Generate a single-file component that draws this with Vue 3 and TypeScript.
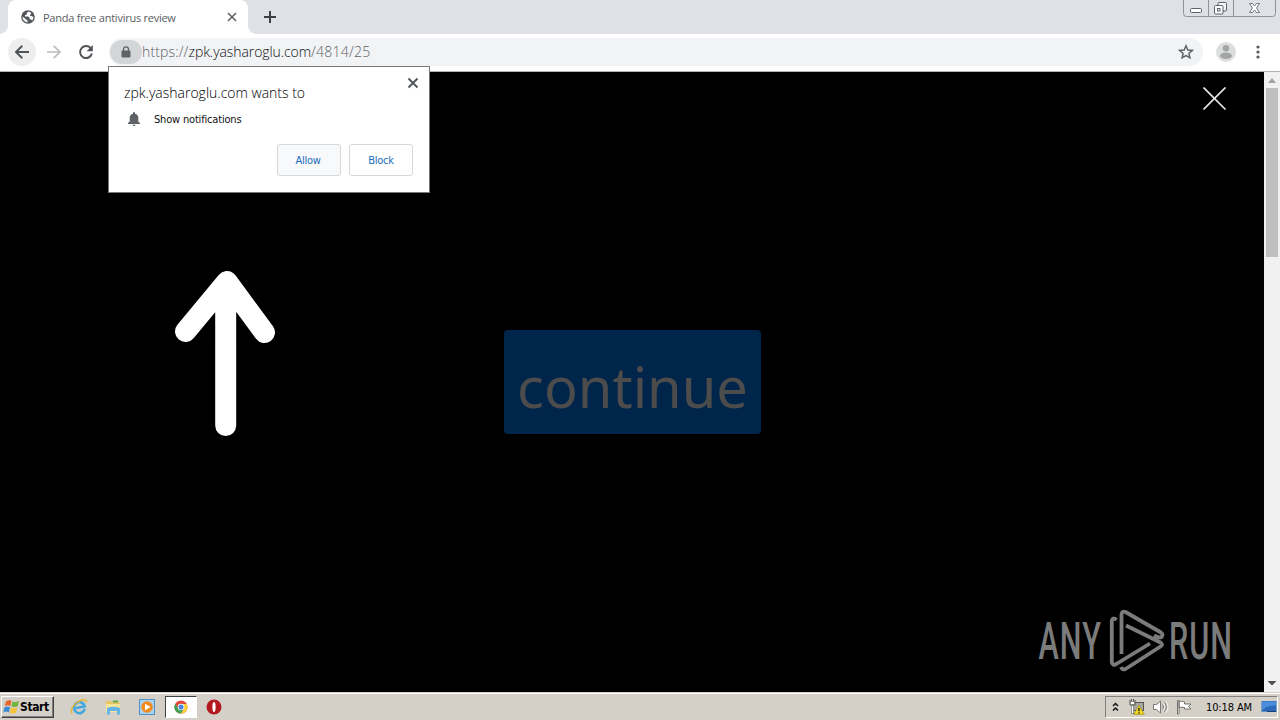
<script setup lang="ts">
import { ref } from 'vue'

const tabTitle = ref('Panda free antivirus review')
const host = 'zpk.yasharoglu.com'
const path = '/4814/25'
const clock = '10:18 AM'
const actions = ['Allow', 'Block']
</script>

<template>
  <div class="desktop">
    <header class="tabstrip">
      <div class="tab">
        <svg class="globe" width="14" height="14" viewBox="0 0 14 14">
          <circle cx="7" cy="7" r="6.8" fill="#53565a" />
          <path d="M7.5 1.4 5.8 3v1.5L4 5.2v1.3h3.2l1.4 1.2v1.5l1.5.2 1.2 1A5.5 5.5 0 0 0 12.5 7l-1.5-.7-1.8-.2V4.400l1.200-1.200A5.600 5.600 0 0 0 7.500 1.400zM1.500 6.500A5.600 5.600 0 0 0 6.500 12.500v-2L4.200 8.700z" fill="#fff" />
        </svg>
        <span class="tab-title">{{ tabTitle }}</span>
        <svg class="tab-close" width="10" height="10" viewBox="0 0 10 10">
          <path d="M1 1l8 8M9 1l-8 8" stroke="#5f6368" stroke-width="1.6" />
        </svg>
      </div>
      <svg class="new-tab" width="12" height="12" viewBox="0 0 12 12">
        <path d="M6 0v12M0 6h12" stroke="#3c4043" stroke-width="2" />
      </svg>
      <svg class="win-controls" width="94" height="18" viewBox="0 0 94 18">
        <path d="M.5 0v13.500q0 3 3 3h86q3 0 3-3V0M25.500 0v16.500M50.500 0v16.500" fill="none" stroke="#8d929b" />
        <rect x="7.500" y="8.500" width="11" height="4" rx="1" fill="#fff" stroke="#5c616b" />
        <rect x="35" y="2.500" width="8.500" height="8.500" rx="1" fill="#f4f5f7" stroke="#5c616b" />
        <rect x="31.500" y="5.500" width="8.500" height="8.500" rx="1" fill="#fff" stroke="#5c616b" />
        <rect x="34.500" y="8.500" width="2.500" height="2.500" fill="#fff" stroke="#5c616b" />
        <path d="M66.500 3.500h3l2 2.500 2-2.500h3l-3 4.500 3 4.500h-3l-2-2.500-2 2.500h-3l3-4.500z" fill="#fff" stroke="#747983" />
      </svg>
    </header>

    <nav class="toolbar">
      <span class="round back">
        <svg width="16" height="16" viewBox="0 0 16 16">
          <path d="M15 8H2.500M8.300 1.800 2 8l6.300 6.200" fill="none" stroke="#505357" stroke-width="1.900" />
        </svg>
      </span>
      <svg class="forward" width="16" height="16" viewBox="0 0 16 16">
        <path d="M1 8h12.500M7.700 1.800 14 8l-6.300 6.200" fill="none" stroke="#babcbe" stroke-width="1.700" />
      </svg>
      <svg class="reload" width="16" height="16" viewBox="0 0 16 16">
        <path d="M13 4.600A6 6 0 1 0 13.900 9.500" fill="none" stroke="#505357" stroke-width="2" />
        <path d="M14.800 1v6.200H8.600z" fill="#505357" />
      </svg>
      <div class="omnibox">
        <span class="lock">
          <svg width="10" height="12" viewBox="0 0 10 12">
            <path d="M2.500 5.500V3.300a2.500 2.500 0 0 1 5 0v2.200" fill="none" stroke="#5f6368" stroke-width="1.300" />
            <rect x=".5" y="4.500" width="9" height="7" rx="1" fill="#5f6368" />
          </svg>
        </span>
        <span class="url"><span class="scheme">https://</span><span class="host">{{ host }}</span><span class="path">{{ path }}</span></span>
        <svg class="star" width="16" height="16" viewBox="0 0 16 16">
          <path d="M8 1.800 9.800 6l4.500.4-3.400 3 1 4.400L8 11.500l-3.900 2.300 1-4.400-3.400-3L6.200 6z" fill="none" stroke="#5f6368" stroke-width="1.500" />
        </svg>
      </div>
      <svg class="avatar" width="20" height="20" viewBox="0 0 20 20">
        <circle cx="10" cy="10" r="10" fill="#dcdddd" />
        <circle cx="10" cy="6.200" r="3.200" fill="#a2a4a6" />
        <ellipse cx="10" cy="13.700" rx="6" ry="3.200" fill="#a2a4a6" />
      </svg>
      <svg class="kebab" width="4" height="14" viewBox="0 0 4 14">
        <g fill="#55585c"><circle cx="2" cy="2" r="1.600" /><circle cx="2" cy="7" r="1.600" /><circle cx="2" cy="12" r="1.600" /></g>
      </svg>
    </nav>

    <main class="content">
      <div class="page">
        <svg class="arrow" width="102" height="168" viewBox="0 0 102 168">
          <path d="M11.500 62.500 53 12.500l37.500 51M51.700 20v136.500" fill="none" stroke="#fff" stroke-width="21" stroke-linecap="round" stroke-linejoin="round" />
        </svg>
        <button class="continue"><span>continue</span></button>
        <svg class="page-close" width="24" height="24" viewBox="0 0 24 24">
          <path d="M.5.500l22 22M22.500.500l-22 22" stroke="#e8e8e8" stroke-width="1.700" />
        </svg>
        <svg class="brand" width="194" height="64" viewBox="0 0 194 64">
          <g class="brand-text" fill="#7b7b7b">
            <text transform="translate(.5 50) scale(.6 1)" textLength="104" lengthAdjust="spacing">ANY</text>
            <text transform="translate(131 50) scale(.6 1)" textLength="105" lengthAdjust="spacing">RUN</text>
          </g>
          <g fill="none" stroke="#7b7b7b" stroke-width="3.800" stroke-linejoin="round">
            <path d="M78.500 11q-4-3.500-4.700 1v41.500q1 3.500 4.500 1.500L112 34.500" />
            <path d="M83.500 45V5.500q.5-4 4-2.500L123 23.500q2.500 2 .5 4.500-2.500 1.500-7.500-1.500" />
            <path d="M88 16.500 122.500 33.500q3 2 0 4L87.500 60q-3 1.500-4.500-2" />
          </g>
        </svg>
      </div>
      <aside class="scrollbar">
        <svg width="16" height="16" viewBox="0 0 16 16"><path d="M4 11l4-5 4 5z" fill="#a3a3a3" /></svg>
        <div class="thumb"></div>
        <svg class="down" width="16" height="16" viewBox="0 0 16 16"><path d="M3.500 5h9l-4.500 4.500z" fill="#505050" /></svg>
      </aside>
    </main>

    <section class="prompt">
      <svg class="prompt-close" width="12" height="12" viewBox="0 0 12 12">
        <path d="M1.500 1.500l9 9M10.500 1.500l-9 9" stroke="#53565a" stroke-width="1.900" />
      </svg>
      <div class="prompt-title"><span>{{ host }} wants to</span></div>
      <div class="permission">
        <svg width="12" height="14" viewBox="0 0 12 14">
          <path d="M6 0a1 1 0 0 1 1 1v.7C9.300 2.200 10.300 4 10.300 6v3.600L12 11v1H0v-1l1.700-1.400V6c0-2 1-3.800 3.300-4.300V1a1 1 0 0 1 1-1zM4.500 12.700h3a1.500 1.300 0 0 1-3 0z" fill="#5f6368" />
        </svg>
        <span>Show notifications</span>
      </div>
      <div class="actions">
        <button v-for="a in actions" :key="a" :class="a.toLowerCase()"><span>{{ a }}</span></button>
      </div>
    </section>

    <footer class="taskbar">
      <button class="start">
        <svg width="17" height="16" viewBox="0 0 17 16">
          <path d="M3 2.500Q6 .5 8.500 2L7.300 7Q4.800 5.500 1.800 7z" fill="#e8622a" />
          <path d="M9.500 2.500q3 1.300 6.500-.5l-1.300 5.200q-3.200 1.500-6.300.1z" fill="#72b43c" />
          <path d="M1.500 8.300q3-1.500 5.500-.1l-1.200 5.200q-2.800-1.600-5.600 0z" fill="#3d8ad4" />
          <path d="M8 8.600q3 1.400 6.300 0L13 13.600q-3 1.700-6.200.1z" fill="#f6c436" />
        </svg>
        <span>Start</span>
      </button>
      <div class="quick">
        <svg width="18" height="18" viewBox="0 0 18 18">
          <path d="M14.300 12A5.500 5.500 0 1 1 14.800 9.500H5.500" fill="none" stroke="#43a7df" stroke-width="2.500" transform="rotate(-12 9 9)" />
          <path d="M2.200 15.500C-.5 12 4 5 10.500 2.500 14 1.200 17 1.500 16.500 4.500" fill="none" stroke="#e7b52f" stroke-width="1.400" />
        </svg>
        <svg width="18" height="18" viewBox="0 0 18 18">
          <path d="M2 3h5l1 1.500h8V14H2z" fill="#e9c65c" /><path d="M2 6h14v8H2z" fill="#f7e49b" />
          <path d="M3 10Q9 7.500 16 10v6.500h-3V13H6v3.500H3z" fill="#64b5e3" />
          <path d="M9 2.500h5v2H9z" fill="#63a942" />
        </svg>
        <svg width="18" height="18" viewBox="0 0 18 18">
          <rect x="1.500" y="1.500" width="15" height="15" fill="#a8d2ef" stroke="#4e91cb" />
          <circle cx="9" cy="9" r="5.800" fill="#f28b1d" /><path d="M7 5.700 12.500 9 7 12.300z" fill="#fff" />
        </svg>
      </div>
      <div class="active-app">
        <svg width="14" height="14" viewBox="0 0 16 16">
          <circle cx="8" cy="8" r="7.500" fill="#e34b3c" />
          <path d="M1.500 4.250A7.500 7.500 0 0 0 8 15.500l3.300-5.600H4.700z" fill="#3ba355" />
          <path d="M8 4.500h6.650A7.500 7.500 0 0 1 8 15.500l3.300-5.600z" fill="#fad03c" />
          <circle cx="8" cy="8" r="3.800" fill="#fff" /><circle cx="8" cy="8" r="2.900" fill="#4a86e0" />
        </svg>
      </div>
      <svg class="opera" width="16" height="16" viewBox="0 0 16 16">
        <circle cx="8" cy="8" r="7.500" fill="#b3191f" /><ellipse cx="8" cy="8" rx="1.600" ry="5" fill="#fff" />
      </svg>
      <div class="tray">
        <svg class="chev" width="7" height="10" viewBox="0 0 7 10"><path d="M1 4l2.500-2.500L6 4M1 8.500 3.500 6 6 8.500" fill="none" stroke="#111" stroke-width="1.500" /></svg>
        <svg class="net" width="17" height="16" viewBox="0 0 17 16">
          <rect x="4.500" y="3.500" width="11" height="8" fill="#a6a69e" stroke="#55554f" />
          <path d="M2 1v5h5V1M3.500 0v3M5.500 0v3M4.500 6v8.500H9" fill="none" stroke="#4f4f4b" />
          <path d="M2.500 2.500h4v3h-4zM3.500 6.500h2v8h-2z" fill="#fff" stroke="#66665f" stroke-width=".6" />
          <path d="M11 6.500l5.300 8.800H5.700z" fill="#f4dc26" stroke="#aa931a" stroke-width=".8" /><path d="M11 9v3.200M11 13.200v1.200" stroke="#111" stroke-width="1.300" />
        </svg>
        <svg class="snd" width="17" height="16" viewBox="0 0 17 16">
          <path d="M1.500 5.500h3L8.500 2v12l-4-3.500h-3z" fill="#fff" stroke="#77776f" />
          <path d="M10.500 5.500q2 2.500 0 5M12.500 3.500q3.500 4.500 0 9" fill="none" stroke="#77776f" /><path d="M11.500 4.500q3 3.500 0 7M14 2.500q4 5.500 0 11" fill="none" stroke="#fff" stroke-width=".8" />
        </svg>
        <svg class="flag" width="16" height="16" viewBox="0 0 16 16">
          <path d="M1.500 1.500h1.500v13.500H1.500zM3 2.500q3-1 5.500.5V5h6.500l-2.500 2.500L15 10H8.500V8.500Q6 8 3 8.500z" fill="#fff" stroke="#666660" stroke-width=".9" />
        </svg>
        <span class="clock">{{ clock }}</span>
        <svg class="show" width="16" height="14" viewBox="0 0 16 14">
          <rect x=".5" y="1" width="15" height="11" fill="#2b69ba" /><path d="M1 1.500h14v4Q7 5 1 10z" fill="#4b8cdb" /><path d="M1 11.500h14" stroke="#16407c" /><path d="M1 12h5" stroke="#b7d8f5" />
        </svg>
      </div>
    </footer>
  </div>
</template>

<style>
body { margin: 0; overflow: hidden; }
</style>

<style scoped>
* { box-sizing: border-box; }
.desktop { position: relative; width: 1280px; height: 720px; display: flex; flex-direction: column; overflow: hidden; background: #000; font-family: "DejaVu Sans Condensed", "DejaVu Sans", sans-serif; }
svg { display: block; flex: none; }
span { white-space: nowrap; }
button { font: inherit; padding: 0; margin: 0; }
.tabstrip { height: 34px; flex: none; background: #dee1e6; display: flex; }
.tab { position: relative; width: 240px; height: 34px; margin-left: 8px; border-radius: 8px 8px 0 0; background: #fff; display: flex; align-items: center; padding: 0 11px 0 13px; }
.tab::before, .tab::after { content: ""; position: absolute; bottom: 0; width: 8px; height: 8px; }
.tab::before { left: -8px; background: radial-gradient(circle at 0 0, transparent 7.500px, #fff 8px); }
.tab::after { right: -8px; background: radial-gradient(circle at 100% 0, transparent 7.500px, #fff 8px); }
.tab-title { margin-left: 8px; font: 11px "Open Sans", sans-serif; letter-spacing: -.25px; color: #5a5d61; }
.tab-close { margin-left: auto; }
.new-tab { margin: 11px 0 0 16px; }
.win-controls { margin-left: auto; margin-right: 3px; }
.toolbar { height: 38px; flex: none; background: #fff; border-bottom: 1px solid #b4b4b4; display: flex; align-items: center; padding: 0 20px 1px 8px; }
.round { width: 28px; height: 28px; border-radius: 50%; background: #eeeeee; display: grid; place-items: center; }
.forward { margin-left: 10px; }
.reload { margin-left: 16px; }
.omnibox { width: 1095px; height: 28px; border-radius: 14px; margin-left: 15px; background: #f1f3f4; display: flex; align-items: center; }
.lock { width: 32px; height: 24px; margin-left: 1px; border-radius: 12px; background: #d3d5d6; display: grid; place-items: center; }
.url { font: 300 14px/20px "Open Sans", sans-serif; color: #101114; }
.scheme { letter-spacing: .15px; }
.host { letter-spacing: -.08px; }
.path { letter-spacing: .25px; }
.scheme, .path { color: #5d6165; }
.star { margin-left: auto; margin-right: 9px; }
.avatar { margin-left: 13px; }
.kebab { margin-left: 20px; }
.content { height: 620px; flex: none; display: flex; }
.page { width: 1264px; height: 620px; background: #000; position: relative; }
.arrow { position: absolute; left: 174px; top: 197px; }
.continue { position: absolute; left: 504px; top: 258px; width: 257px; height: 104px; border: 0; border-radius: 4px; background: #00254b; color: #4c4c4c; font: 56px/104px "Noto Sans", sans-serif; display: flex; justify-content: center; }
.continue span { position: relative; top: 4px; }
.page-close { position: absolute; left: 1203px; top: 15px; }
.brand { position: absolute; left: 1038px; top: 537px; }
.brand-text { font-family: "Roboto", sans-serif; font-size: 51px; font-weight: 500; }
.scrollbar { width: 16px; background: #f1f1f1; display: flex; flex-direction: column; align-items: center; }
.thumb { width: 12px; height: 169px; background: #bfbfbf; }
.down { margin-top: auto; }
.prompt { position: absolute; left: 108px; top: 66px; width: 322px; height: 127px; background: #fff; border: 1px solid #777; padding: 16px 16px 16px 15px; display: flex; flex-direction: column; }
.prompt-close { position: absolute; right: 10px; top: 10px; }
.prompt-title { height: 20px; font: 300 14px/20px "Open Sans", sans-serif; color: #000; }
.permission { height: 20px; margin-top: 6px; padding-left: 4px; display: flex; align-items: center; gap: 14px; font-size: 11px; letter-spacing: -.18px; color: #111; }
.actions { margin-top: auto; display: flex; justify-content: flex-end; gap: 8px; }
.actions button { width: 64px; height: 32px; border: 1px solid #d5d7da; border-radius: 3px; background: #fff; color: #1a6bbb; font-size: 11px; letter-spacing: -.3px; }
.actions .allow span { position: relative; left: -1px; }
.actions .allow { background: #f8f9fa; }
.taskbar { height: 28px; background: #d4d0c8; border-top: 1px solid #d4d0c8; box-shadow: inset 0 1px #fff; display: flex; align-items: center; padding: 1px 2px 0 1px; }
.start { width: 53px; height: 22px; background: #d4d0c8; border: 1px solid; border-color: #fff #404040 #404040 #fff; box-shadow: inset -1px -1px #808080; display: flex; align-items: center; padding-left: 1px; color: #000; }
.start span { font-size: 12px; font-weight: 700; letter-spacing: -.4px; }
.quick { display: flex; gap: 16px; margin-left: 16px; }
.active-app { width: 32px; height: 22px; margin-left: 9px; background: #fff; border: 1px solid; border-color: #404040 #fff #fff #404040; display: grid; place-items: center; }
.opera { margin-left: 9px; }
.tray { margin-left: auto; width: 173px; height: 22px; border: 1px solid; border-color: #808080 #fff #fff #808080; display: flex; align-items: center; padding-left: 6px; }
.net { margin-left: 9px; }
.snd { margin-left: 7px; }
.flag { margin-left: 7px; }
.clock { margin-left: 14px; font-size: 11px; letter-spacing: -.12px; color: #000; }
.show { margin-left: auto; margin-right: 0; }
</style>
